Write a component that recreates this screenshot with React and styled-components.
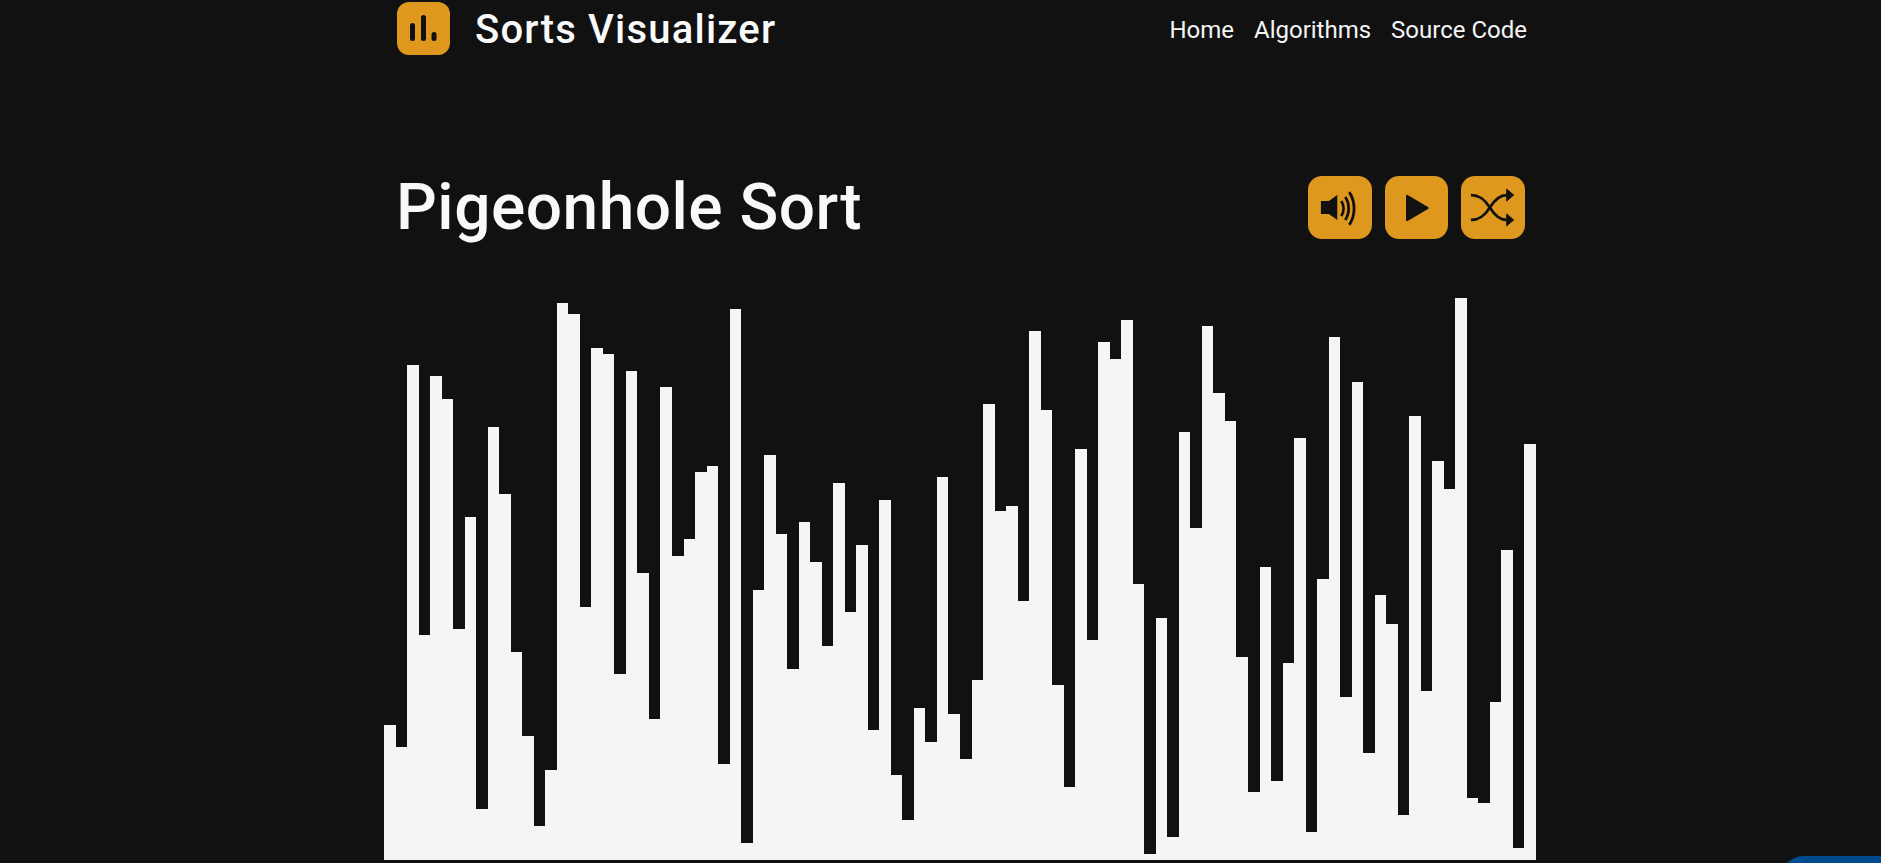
import React from "react";
import styled, { createGlobalStyle } from "styled-components";

const GlobalStyle = createGlobalStyle`
  html, body {
    margin: 0;
    height: 100%;
    overflow: hidden;
    background-color: #111111;
  }
  body {
    font-family: Roboto, "Liberation Sans", sans-serif;
    color: #f5f5f5;
  }
`

const Page = styled.div`
  width: 1152px;
  margin-left: 384px;
`

const Header = styled.header`
  display: flex;
  align-items: center;
  justify-content: space-between;
  height: 55px;
  padding: 1px 9px 1px 13px;
`

const Brand = styled.div`
  display: flex;
  align-items: center;
  gap: 25px;
`

const Logo = styled.div`
  display: flex;
  align-items: center;
  justify-content: center;
  width: 53px;
  height: 53px;
  border-radius: 12px;
  background-color: #df981e;
`

const BrandName = styled.div`
  padding-top: 2px;
  font-size: 40px;
  font-weight: 500;
  letter-spacing: 1.2px;
  color: #f9f9f9;
`

const Nav = styled.nav`
  display: flex;
  gap: 20px;
  padding-top: 2px;
`

const NavLink = styled.a`
  font-size: 24px;
  color: #f5f5f5;
`

const TitleRow = styled.div`
  display: flex;
  align-items: center;
  justify-content: space-between;
  height: 63px;
  margin-top: 119px;
  padding: 0 11px 0 12px;
`

const Title = styled.h1`
  margin: 0;
  font-size: 64px;
  font-weight: 500;
  letter-spacing: 0.5px;
  color: #f9f9f9;
`

const Controls = styled.div`
  display: flex;
  gap: 13px;
`

const ControlButton = styled.button`
  display: flex;
  align-items: center;
  justify-content: center;
  width: 63.6px;
  height: 63px;
  padding: 0;
  border: none;
  border-radius: 14px;
  background-color: #df981e;
`

const Chart = styled.div`
  display: flex;
  align-items: flex-end;
  height: 563px;
  margin-top: 58px;
`

const Bar = styled.div`
  flex: none;
  background-color: #f5f5f5;
`

const Badge = styled.div`
  position: fixed;
  left: 1780px;
  top: 856px;
  width: 200px;
  height: 60px;
  border-radius: 24px;
  background-color: #004a8f;
`

const heights = [
  135, 113, 495, 225, 484, 461, 231, 343, 51, 433,
  366, 208, 124, 34, 90, 557, 546, 253, 512, 506,
  186, 489, 287, 141, 473, 304, 321, 388, 394, 96,
  551, 17, 270, 405, 326, 191, 338, 298, 214, 377,
  248, 315, 130, 360, 85, 40, 152, 118, 383, 146,
  101, 180, 456, 349, 354, 259, 529, 450, 175, 73,
  411, 220, 518, 501, 540, 276, 6, 242, 23, 428,
  332, 534, 467, 439, 203, 68, 293, 79, 197, 422,
  28, 281, 523, 163, 478, 107, 265, 236, 45, 444,
  169, 399, 371, 562, 62, 57, 158, 310, 12, 416,
]

// 100 bars share 1152px, rounded so the edges land on whole pixels
const barWidth = (i) => Math.round((i + 1) * 11.52) - Math.round(i * 11.52)

const LogoIcon = () => (
  <svg width="53" height="53" viewBox="0 0 53 53" fill="#111111">
    <rect x="13" y="21" width="5" height="18" rx="2.5" />
    <rect x="24" y="13" width="5" height="26" rx="2.5" />
    <rect x="34.5" y="30" width="5" height="9" rx="2.5" />
  </svg>
)

const SoundIcon = () => (
  <svg width="64" height="63" viewBox="0 0 64 63" fill="none" stroke="#111111" strokeWidth="2.8">
    <path d="M13 25h8l8.500-6v25l-8.500-6h-8z" fill="#111111" stroke="none" />
    <path d="M33.500 25c3 4.500 3 10.500 0 15" />
    <path d="M37.500 21c4.500 6.500 4.500 16.500 0 23" />
    <path d="M41.500 16c6.500 9.500 6.500 23.500 0 33" />
  </svg>
)

const PlayIcon = () => (
  <svg width="63" height="63" viewBox="0 0 63 63" fill="#111111">
    <path d="M21 20c0-1 .8-1.400 1.600-1l20.400 12c.8.500.8 1.500 0 2l-20.400 12c-.8.400-1.600 0-1.600-1z" />
  </svg>
)

const ShuffleIcon = () => (
  <svg width="64" height="63" viewBox="0 0 64 63" fill="none" stroke="#111111" strokeWidth="2.8">
    <path d="M10 19c10 0 15 6 19 12.500c4 6.500 9 12.500 17 12.500" />
    <path d="M10 44c10 0 15-6 19-12.500c4-6.500 9-12.500 17-12.500" />
    <path d="M46 13l7 6-7 6z" fill="#111111" strokeWidth="1" />
    <path d="M46 38l7 6-7 6z" fill="#111111" strokeWidth="1" />
  </svg>
)

const App = () => (
  <Page>
    <GlobalStyle />
    <Header>
      <Brand>
        <Logo>
          <LogoIcon />
        </Logo>
        <BrandName>Sorts Visualizer</BrandName>
      </Brand>
      <Nav>
        <NavLink>Home</NavLink>
        <NavLink>Algorithms</NavLink>
        <NavLink>Source Code</NavLink>
      </Nav>
    </Header>
    <TitleRow>
      <Title>Pigeonhole Sort</Title>
      <Controls>
        <ControlButton><SoundIcon /></ControlButton>
        <ControlButton><PlayIcon /></ControlButton>
        <ControlButton><ShuffleIcon /></ControlButton>
      </Controls>
    </TitleRow>
    <Chart>
      {heights.map((h, i) => (
        <Bar key={i} style={{ width: barWidth(i), height: h }} />
      ))}
    </Chart>
    <Badge />
  </Page>
)

export default App;
